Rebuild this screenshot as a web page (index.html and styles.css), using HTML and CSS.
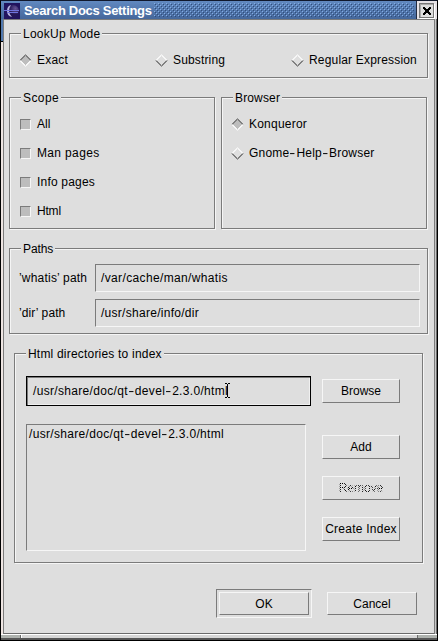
FILE: index.html
```html
<!DOCTYPE html>
<html lang="en">
<head>
<meta charset="utf-8">
<title>Search Docs Settings</title>
<link rel="stylesheet" href="styles.css">
</head>
<body>
<svg class="defs" width="0" height="0">
  <symbol id="radio-off" viewBox="0 0 13 13"><path class="hi" d="M.5 6.5l6-6 6 6M1.5 6.5l5-5 5 5"/><path class="lo" d="M.5 6.5l6 6 6-6M1.5 6.5l5 5 5-5"/></symbol>
  <symbol id="radio-on" viewBox="0 0 13 13"><path class="fill" d="M1 6.5 6.5 1 12 6.5 6.5 12z"/><path class="lo" d="M.5 6.5l6-6 6 6M1.5 6.5l5-5 5 5"/><path class="hi" d="M.5 6.5l6 6 6-6M1.5 6.5l5 5 5-5"/></symbol>
</svg>
<div class="window">
  <header class="titlebar">
    <svg class="app-icon" width="16" height="16" viewBox="0 0 16 16">
      <defs><radialGradient id="orb" cx=".7" cy=".3"><stop offset="0" stop-color="#655394"/><stop offset="1" stop-color="#241857"/></radialGradient></defs>
      <rect width="16" height="16" fill="#21145e"/>
      <circle cx="9" cy="8" r="6" fill="url(#orb)"/>
      <path d="M7 2Q3 3 3 8t5 6Q5 11 5 8t2-6" fill="#b7b3df"/>
      <path d="M0 7.5h15M3 9.5h11" stroke="#6f74dd"/>
    </svg>
    <h1 class="t-title">Search Docs Settings</h1>
    <div class="grip"></div>
    <div class="close-area"><div class="close"><svg width="8" height="8" viewBox="0 0 8 8" shape-rendering="crispEdges"><path d="M0 0h2v1h1v1h2V1h1V0h2v2H7v1H6v2h1v1h1v2H6V7H5V6H3v1H2v1H0V6h1V5h1V3H1V2H0z"/></svg></div></div>
  </header>
  <div class="body">
    <div class="edge"></div>
    <main class="content">
      <section class="group lookup">
        <h2 class="t-lookup">LookUp Mode</h2>
        <div class="modes">
          <label><svg class="radio"><use href="#radio-on"/></svg><span class="t-exact">Exact</span></label>
          <label><svg class="radio"><use href="#radio-off"/></svg><span class="t-sub">Substring</span></label>
          <label><svg class="radio"><use href="#radio-off"/></svg><span class="t-reg">Regular Expression</span></label>
        </div>
      </section>
      <div class="columns">
        <section class="group choices">
          <h2 class="t-scope">Scope</h2>
          <label><i class="check"></i><span class="t-all">All</span></label>
          <label><i class="check"></i><span class="t-man">Man pages</span></label>
          <label><i class="check"></i><span class="t-info">Info pages</span></label>
          <label><i class="check"></i><span class="t-html">Html</span></label>
        </section>
        <section class="group choices">
          <h2 class="t-browser">Browser</h2>
          <label><svg class="radio"><use href="#radio-on"/></svg><span class="t-konq">Konqueror</span></label>
          <label><svg class="radio"><use href="#radio-off"/></svg><span class="t-gnome">Gnome<b>-</b>Help<b>-</b>Browser</span></label>
        </section>
      </div>
      <section class="group paths">
        <h2 class="t-paths">Paths</h2>
        <div class="row"><span class="name t-wl">’whatis’ path</span><div class="field"><span class="t-wv">/var/cache/man/whatis</span></div></div>
        <div class="row"><span class="name t-dl">’dir’ path</span><div class="field"><span class="t-dv">/usr/share/info/dir</span></div></div>
      </section>
      <section class="group dirs">
        <h2 class="t-dirs">Html directories to index</h2>
        <div class="left">
          <div class="entry"><span class="t-path">/usr/share/doc/qt<b>-</b>devel<b>-</b>2.3.0/html</span><svg class="ibeam" width="5" height="15" viewBox="0 0 5 15"><path d="M0 .5h2M3 .5h2M2.5 1v13M0 14.5h2M3 14.5h2" stroke="#000" fill="none"/></svg></div>
          <div class="list"><span class="t-path">/usr/share/doc/qt<b>-</b>devel<b>-</b>2.3.0/html</span></div>
        </div>
        <div class="right">
          <button class="btn browse"><span class="t-browse">Browse</span></button>
          <button class="btn"><span class="t-add">Add</span></button>
          <button class="btn" disabled><span class="t-remove">Remove</span></button>
          <button class="btn"><span class="t-create">Create Index</span></button>
        </div>
      </section>
      <footer class="actions">
        <div class="default"><button class="btn"><span class="t-ok">OK</span></button></div>
        <button class="btn"><span class="t-cancel">Cancel</span></button>
      </footer>
    </main>
  </div>
  <div class="resize"><i></i><b></b><i></i></div>
</div>
</body>
</html>
```
FILE: styles.css
```css
* { box-sizing: border-box; }
body { margin: 0; background: #000; font: 12px/14px "Liberation Sans", Arial, sans-serif; color: #000; }
h1, h2 { margin: 0; font-size: 12px; font-weight: normal; white-space: nowrap; }
b { font-weight: normal; display: inline-block; width: 7px; text-align: center; transform: scaleX(1.5); }
span { white-space: nowrap; }
.defs { position: absolute; }
.window { width: 438px; height: 641px; display: flex; flex-direction: column; border: 1px solid #000; border-top-color: #10182c; }

.titlebar { height: 18px; display: flex; background: linear-gradient(#6189c0, #45679b); flex: none; }
.app-icon { margin: 2px 4px 0 3px; flex: none; }
.titlebar h1 { font-size: 13px; font-weight: bold; line-height: 19px; color: #fff; width: 130px; }
.grip {
  flex: 1; margin: 2px 2px 2px 0;
  background:
    linear-gradient(#83ade6 0 0) 0 0 / 4px 4px,
    none;
  background:
    radial-gradient(circle at .5px .5px, #83ade6 .6px, transparent .7px) 0 0 / 4px 4px,
    radial-gradient(circle at .5px .5px, #304e7c .6px, transparent .7px) 1px 1px / 4px 4px,
    radial-gradient(circle at .5px .5px, #83ade6 .6px, transparent .7px) 2px 2px / 4px 4px,
    radial-gradient(circle at .5px .5px, #304e7c .6px, transparent .7px) 3px 3px / 4px 4px;
}
.close-area { width: 21px; background: #e6e2e6; border-left: 1px solid #222b40; padding: 2px 0 0 2px; }
.close { width: 15px; height: 15px; border: 1px solid #777; box-shadow: inset 1px 1px #aaa, 1px 1px #fff; background: #ddd; display: flex; align-items: center; justify-content: center; }

.body { flex: 1; display: flex; min-height: 0; background: linear-gradient(90deg, #ddd 0 434px, #c8c8c8 434px 435px, #6b6b6b 435px); }
.edge { width: 2px; flex: none; background: linear-gradient(#5279af 0 22px, #000 22px 23px, #eee5e2 23px); }
.content { flex: 1; background: #dedede; border: 1px solid #7b7b7b; border-bottom-color: #6b6b6b; padding: 13px 0 0 5px; margin-right: 2px; }

.group { border: 1px solid #7b7b7b; box-shadow: 1px 1px #f5f5f5, inset 1px 1px #f5f5f5; }
.group > h2 { width: max-content; height: 14px; margin: -7px 0 0 11px; padding: 0 2px; background: #dedede; line-height: 15px; }
label { display: flex; align-items: center; height: 14px; }
.lookup { width: 419px; height: 45px; }
.modes { display: grid; grid-template-columns: 136px 136px 1fr; padding: 12px 0 0 9px; }
.radio { width: 13px; height: 13px; margin-right: 5px; flex: none; }
.lo, .hi { fill: none; stroke-width: 1; }
.lo { stroke: #808080; }
.hi { stroke: #f6f6f6; }
.fill { fill: #bdbdbd; }

.columns { display: flex; gap: 6px; margin-top: 19px; }
.choices { width: 206px; height: 132px; }
.choices label { margin: 12px 0 15px 10px; }
.choices label + label { margin-top: 15px; }
.choices label:has(.radio) { margin-left: 9px; }
.check { width: 11px; height: 11px; margin-right: 6px; background: #bdbdbd; border: 1px solid; border-color: #7b7b7b #f6f6f6 #f6f6f6 #7b7b7b; }

.paths { width: 419px; height: 86px; margin-top: 19px; }
.row { display: flex; align-items: center; margin: 7px 0 0 9px; }
.paths h2 + .row { margin-top: 8px; }
.row .name { width: 76px; }
.field { width: 325px; height: 28px; padding: 6px 5px; border: 1px solid; border-color: #7b7b7b #f6f6f6 #f6f6f6 #7b7b7b; }

.dirs { width: 409px; height: 210px; margin: 19px 0 0 5px; display: grid; grid-template-columns: 285px 78px; grid-template-rows: 7px auto; column-gap: 11px; padding-left: 11px; }
.dirs > h2 { grid-column: 1 / 3; margin-left: 0; }
.left { padding-top: 15px; }
.entry { position: relative; width: 285px; height: 30px; padding: 7px 6px; border: 1px solid #000; box-shadow: inset 1px 1px #7b7b7b, inset -1px -1px #f0f0f0; }
.ibeam { position: absolute; left: 198px; top: 6px; }
.list { width: 280px; height: 127px; margin-top: 18px; padding: 2px; border: 1px solid; border-color: #7b7b7b #f6f6f6 #f6f6f6 #7b7b7b; }
.right { padding-top: 18px; }
.btn { display: flex; align-items: center; justify-content: center; width: 78px; height: 24px; margin: 0 0 17px; padding: 0; background: #dedede; border: 1px solid; border-color: #f6f6f6 #7b7b7b #7b7b7b #f6f6f6; font: inherit; color: #000; }
.browse { margin-bottom: 32px; }
.btn:disabled span { color: transparent; background: repeating-conic-gradient(#000 0 25%, transparent 0 50%) 0 0 / 2px 2px; background-clip: text; -webkit-background-clip: text; }

.actions { display: flex; align-items: center; gap: 15px; margin: 26px 0 0 207px; }
.actions .btn { width: 90px; height: 23px; margin: 0; }
.default { width: 96px; height: 29px; padding: 2px; border: 1px solid; border-color: #7b7b7b #f6f6f6 #f6f6f6 #7b7b7b; }

.resize { height: 6px; flex: none; display: flex; background: #aeb2ae; border-top: 1px solid #fff; border-bottom: 2px solid #555; }
.resize i { width: 19px; }
.resize b { width: auto; flex: 1; display: block; transform: none; background: #d6d6d6; border: 1px solid #6b6b6b; border-width: 0 1px; box-shadow: inset 1px 0 #fff; }

.titlebar .t-title { letter-spacing: -.3px; }
.t-lookup { letter-spacing: .25px; }
.t-exact { letter-spacing: .2px; }
.t-sub { letter-spacing: .15px; }
.t-reg { letter-spacing: .18px; }
.t-scope { letter-spacing: .4px; }
.t-man { letter-spacing: .35px; }
.t-info { letter-spacing: .2px; }
.t-html { letter-spacing: -.2px; }
.t-browser { letter-spacing: .15px; }
.t-konq, .t-gnome { letter-spacing: .22px; }
.t-paths { letter-spacing: -.1px; }
.t-wl { letter-spacing: .2px; }
.t-dl { letter-spacing: .1px; }
.t-wv { letter-spacing: .36px; }
.t-dv { letter-spacing: .28px; }
.t-path { letter-spacing: .32px; }
.t-dirs { letter-spacing: .2px; }
.t-create { letter-spacing: .25px; }
```
